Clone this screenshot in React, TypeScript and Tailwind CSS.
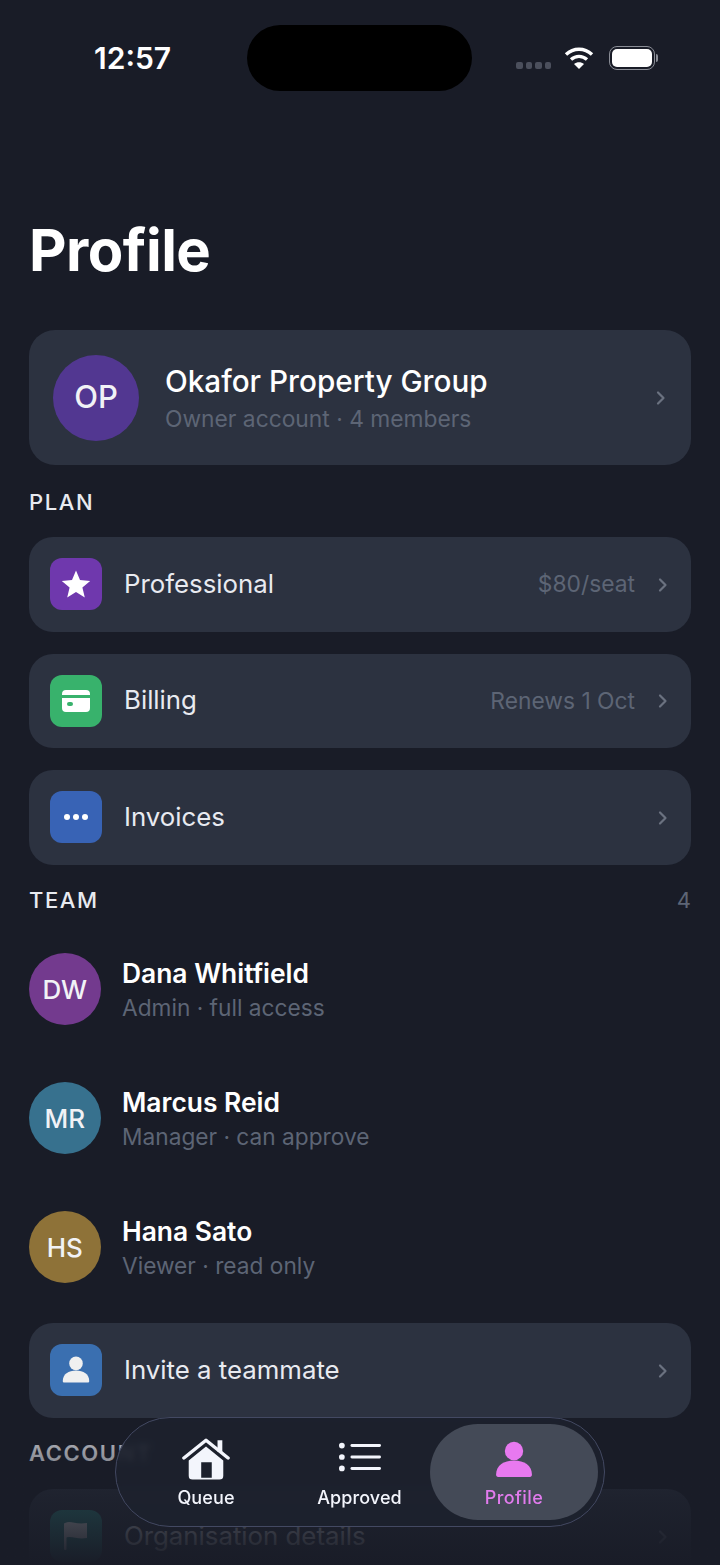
import type { ReactNode } from "react";

const Chevron = () => (
  <svg width="10" height="16" viewBox="0 0 10 16" fill="none" className="mt-[1px] shrink-0">
    <path d="M2 2.500 7.500 8 2 13.500" stroke="#6b7280" strokeWidth="2.200" strokeLinecap="round" strokeLinejoin="round" />
  </svg>
);

const PersonIcon = ({ color, size }: { color: string; size: number }) => (
  <svg width={size} height={size} viewBox="0 0 36 36">
    <circle cx="18" cy="9.500" r="8.700" fill={color} />
    <path d="M1 32c0-9 7.500-13.500 17-13.500S35 23 35 32c0 1.200-.8 2-2 2H3c-1.200 0-2-.8-2-2Z" fill={color} />
  </svg>
);

function Row({ icon, tile, label, value }: { icon: ReactNode; tile: string; label: string; value?: string }) {
  return (
    <div className="flex h-[94.500px] items-center rounded-[24px] bg-[#2c3240] pl-[21px] pr-[23px]">
      <div className={`flex h-[52px] w-[52px] shrink-0 items-center justify-center rounded-[12px] ${tile}`}>{icon}</div>
      <span className="ml-[22px] flex-1 text-[25.800px] text-[#e8eaf0]">{label}</span>
      {value && <span className="mr-[23px] text-[22.800px] text-[#5d6575]">{value}</span>}
      <Chevron />
    </div>
  );
}

function Member({ initials, name, role, tone }: { initials: string; name: string; role: string; tone: string }) {
  return (
    <div className="flex h-[72px] items-center">
      <div className={`flex h-[72px] w-[71.500px] shrink-0 items-center justify-center rounded-full text-[26px] font-medium text-[#f1f2f6] ${tone}`}>
        {initials}
      </div>
      <div className="ml-[21.500px] pt-[2px]">
        <div className="text-[26.400px] leading-[35px] font-semibold text-white">{name}</div>
        <div className="text-[22.700px] leading-[33px] text-[#5d6575]">{role}</div>
      </div>
    </div>
  );
}

export default function App() {
  return (
    <div className="relative h-[1565px] w-[720px] overflow-hidden bg-[#191c27] font-['Inter',sans-serif]">
      <header className="flex h-[115px] items-start">
        <span className="ml-[94px] mt-[40px] text-[30px] leading-[36px] font-semibold text-white">12:57</span>
        <div className="ml-[76px] mt-[25px] h-[66px] w-[225px] rounded-full bg-black" />
        <div className="ml-[44px] mt-[46px] flex items-start">
          <div className="mt-[16px] flex gap-[3px]">
            <span className="h-[7px] w-[6.500px] rounded-[2px] bg-[#4b4f5c]" />
            <span className="h-[7px] w-[6.500px] rounded-[2px] bg-[#4b4f5c]" />
            <span className="h-[7px] w-[6.500px] rounded-[2px] bg-[#4b4f5c]" />
            <span className="h-[7px] w-[6.500px] rounded-[2px] bg-[#4b4f5c]" />
          </div>
          <svg width="30" height="24" viewBox="0 0 30 24" className="ml-[13px]" fill="none">
            <path d="M2 8.500C9.500 1.500 20.500 1.500 28 8.500" stroke="#fff" strokeWidth="3.400" />
            <path d="M7 13.500c4.800-4.200 11.200-4.200 16 0" stroke="#fff" strokeWidth="3.400" />
            <path d="M15 23l-5-5c2.900-2.300 7.100-2.300 10 0l-5 5Z" fill="#fff" />
          </svg>
          <div className="ml-[15px] flex h-[24px] w-[46px] items-center justify-center rounded-[8px] border-[1.500px] border-[#8a8d96] p-[2px]">
            <div className="h-full w-full rounded-[5px] bg-white" />
          </div>
          <div className="ml-[1px] mt-[8px] h-[8px] w-[2px] rounded-r-[2px] bg-[#8a8d96]" />
        </div>
      </header>

      <main className="px-[29px]">
        <h1 className="mt-[100px] text-[58px] leading-[70px] font-bold tracking-[-0.5px] text-white">Profile</h1>

        <div className="mt-[45px] flex h-[135px] items-center rounded-[26px] bg-[#2c3240] pl-[24px] pr-[25px]">
          <div className="flex h-[86px] w-[86px] shrink-0 items-center justify-center rounded-full bg-[#523791] text-[31px] font-medium text-[#f1f2f6]">
            OP
          </div>
          <div className="ml-[26px] flex-1 pt-[2px]">
            <div className="text-[29.700px] leading-[40px] font-medium text-white">Okafor Property Group</div>
            <div className="mt-[1px] text-[22.800px] leading-[34px] text-[#5d6575]">Owner account · 4 members</div>
          </div>
          <Chevron />
        </div>

        <h2 className="mt-[23px] text-[22px] leading-[28px] font-medium tracking-[1.600px] text-[#e8eaf0]">PLAN</h2>

        <div className="mt-[21px] flex flex-col gap-[22px]">
          <Row
            tile="bg-[#6f38ad]"
            label="Professional"
            value="$80/seat"
            icon={
              <svg width="30" height="30" viewBox="0 0 30 30">
                <path d="M15 1.500l4 9.600 10.200.8-7.800 6.600 2.400 10L15 22.900 6.200 28.500l2.400-10L.8 11.900 11 11.100Z" fill="#fff" />
              </svg>
            }
          />
          <Row
            tile="bg-[#38b26c]"
            label="Billing"
            value="Renews 1 Oct"
            icon={
              <svg width="28" height="22" viewBox="0 0 28 22">
                <path d="M0 4a4 4 0 0 1 4-4h20a4 4 0 0 1 4 4v1H0ZM0 8h28v10a4 4 0 0 1-4 4H4a4 4 0 0 1-4-4Z" fill="#fff" />
                <rect x="5" y="12" width="6" height="4" rx="2" fill="#38b26c" />
              </svg>
            }
          />
          <Row
            tile="bg-[#3863b5]"
            label="Invoices"
            icon={
              <div className="flex gap-[3px]">
                <span className="h-[6px] w-[6px] rounded-full bg-white" />
                <span className="h-[6px] w-[6px] rounded-full bg-white" />
                <span className="h-[6px] w-[6px] rounded-full bg-white" />
              </div>
            }
          />
        </div>

        <div className="mt-[21.500px] flex items-center justify-between">
          <h2 className="text-[22px] leading-[28px] font-medium tracking-[1.600px] text-[#e8eaf0]">TEAM</h2>
          <span className="text-[22px] leading-[28px] text-[#5d6575]">4</span>
        </div>

        <div className="mt-[39px] flex flex-col gap-[57px]">
          <Member initials="DW" name="Dana Whitfield" role="Admin · full access" tone="bg-[#733a8e]" />
          <Member initials="MR" name="Marcus Reid" role="Manager · can approve" tone="bg-[#37718e]" />
          <Member initials="HS" name="Hana Sato" role="Viewer · read only" tone="bg-[#8e7238]" />
        </div>

        <div className="mt-[40px]">
          <Row tile="bg-[#3a6fb0]" label="Invite a teammate" icon={<PersonIcon color="#f0f0f0" size={28} />} />
        </div>

        <h2 className="mt-[21.500px] text-[22px] leading-[28px] font-semibold tracking-[1.600px] text-[#e8eaf0]">ACCOUNT</h2>

        <div className="mt-[22px]">
          <Row
            tile="bg-[#2f8f8a]"
            label="Organisation details"
            icon={
              <svg width="26" height="30" viewBox="0 0 26 30">
                <path d="M2 2c6-3 10 2 22 0v15c-10 2-16-3-22 0Z" fill="#fff" />
                <rect x="1" y="2" width="2.500" height="27" rx="1" fill="#fff" />
              </svg>
            }
          />
        </div>
      </main>

      <div className="pointer-events-none absolute inset-x-0 bottom-0 h-[125px] bg-gradient-to-b from-[#191c27]/30 via-[#191c27]/75 to-[#191c27]" />

      <nav className="absolute left-[115px] top-[1417px] flex h-[110px] w-[490px] items-center rounded-full border-[1.500px] border-[#434962] bg-[#1d212d]/90 pl-[13px] backdrop-blur-[3px]">
        <div className="flex h-[96px] w-[154px] shrink-0 flex-col items-center justify-end pb-[11px]">
          <svg width="48" height="43" viewBox="0 0 50 44">
            <path d="M2 21.500 25 3l23 18.500" fill="none" stroke="#f3f5fc" strokeWidth="3.600" strokeLinecap="round" strokeLinejoin="round" />
            <rect x="37" y="3" width="5" height="12" fill="#f3f5fc" />
            <path d="M7 24 25 9.500 43 24v16a4 4 0 0 1-4 4H11a4 4 0 0 1-4-4ZM20 26v16h11V26Z" fill="#f3f5fc" fillRule="evenodd" />
          </svg>
          <span className="mt-[7px] text-[18px] leading-[22px] font-medium tracking-[0.1px] text-[#f3f5fc]">Queue</span>
        </div>
        <div className="flex h-[96px] w-[147px] shrink-0 flex-col items-center justify-end pb-[11px] pl-[6px]">
          <svg width="42" height="32" viewBox="0 0 44 32" className="mb-[6px]">
            <circle cx="3" cy="4" r="3" fill="#f3f5fc" />
            <circle cx="3" cy="16" r="3" fill="#f3f5fc" />
            <circle cx="3" cy="28" r="3" fill="#f3f5fc" />
            <rect x="12" y="2.500" width="32" height="3" rx="1.500" fill="#f3f5fc" />
            <rect x="12" y="14.500" width="32" height="3" rx="1.500" fill="#f3f5fc" />
            <rect x="12" y="26.500" width="32" height="3" rx="1.500" fill="#f3f5fc" />
          </svg>
          <span className="mt-[8px] text-[18px] leading-[22px] font-medium tracking-[0.1px] text-[#f3f5fc]">Approved</span>
        </div>
        <div className="flex h-[96px] w-[168px] shrink-0 flex-col items-center justify-end rounded-full bg-[#444a57] pb-[11px]">
          <PersonIcon color="#e879f0" size={38} />
          <span className="mt-[8px] text-[18px] leading-[22px] font-medium tracking-[0.4px] text-[#e27bee]">Profile</span>
        </div>
      </nav>
    </div>
  );
}
